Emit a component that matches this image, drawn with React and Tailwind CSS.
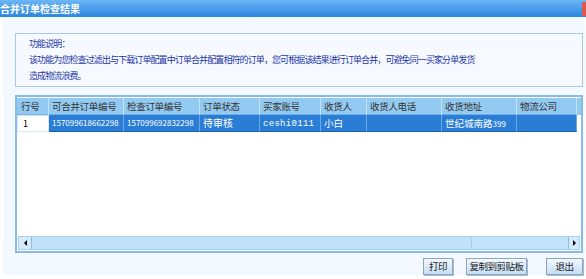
import React from 'react';

const cols = [
  { name: '行号', w: 'w-[32px]' },
  { name: '可合并订单编号', w: 'w-[75px]' },
  { name: '检查订单编号', w: 'w-[76px]' },
  { name: '订单状态', w: 'w-[60px]' },
  { name: '买家账号', w: 'w-[61px]' },
  { name: '收货人', w: 'w-[46px]' },
  { name: '收货人电话', w: 'w-[75px]' },
  { name: '收货地址', w: 'w-[75px]' },
  { name: '物流公司', w: 'w-[60px]' },
];

const Btn = ({ children, className }) => (
  <button className={`${className} h-[17px] border border-[#8aa6c4] bg-gradient-to-b from-[#f2f8fe] to-[#c4def5] text-[9.5px] tracking-[-0.5px] leading-[15px] text-[#222] shadow-[1px_1px_0_#a9bccc]`}>
    {children}
  </button>
);

const Cell = ({ w, children, className = '' }) => (
  <div className={`${w} h-full whitespace-nowrap overflow-hidden bg-[#2a7dd5] text-white border-r border-[#6aa8e6] border-b border-b-[#1e5fb0] pl-[3px] ${className}`}>
    {children}
  </div>
);

export default function App() {
  return (
    <div className="w-[586px] h-[279px] bg-white overflow-hidden" style={{ fontFamily: '"Noto Sans CJK SC", "Noto Sans", sans-serif' }}>
      {/* Title bar */}
      <div className="h-[17px] bg-gradient-to-b from-[#6ab6f6] to-[#2a86de] flex items-center justify-between">
        <span className="text-white font-bold text-[10px] leading-[17px]">合并订单检查结果</span>
        <span className="w-[4px] h-[14px] bg-[#e0584a]"></span>
      </div>

      {/* Body */}
      <div className="ml-[3px] w-[582px] h-[258px] bg-[#f4f9ff] pt-[16px] pl-[12px]">
        {/* Description */}
        <div className="w-[568px] h-[54px] border border-[#a9cbe8] bg-[#f6faff] pl-[13px] pt-[2px] text-[9px] tracking-[-0.9px] leading-[16px] text-[#1c35a8] whitespace-nowrap">
          <div>功能说明：</div>
          <div>该功能为您检查过滤出与下载订单配置中订单合并配置相符的订单，您可根据该结果进行订单合并，可避免同一买家分单发货</div>
          <div>造成物流浪费。</div>
        </div>

        {/* Table */}
        <div className="mt-[8px] w-[568px] h-[158px] border-2 border-[#86bbea] bg-white flex flex-col">
          <div className="flex-1 pt-[1px]">
            <div className="flex h-[17px] bg-[#93caf1] text-[9.5px] tracking-[-0.3px] leading-[16px] text-[#333]">
              {cols.map((c, i) => (
                <div key={c.name} className={`${c.w} border-r border-[#c6e2f8] border-b border-b-[#6fb0e6] ${i === 0 ? 'pl-[4px]' : 'pl-[3px]'} whitespace-nowrap overflow-hidden`}>
                  {c.name}
                </div>
              ))}
            </div>
            <div className="flex h-[17px] text-[9.5px] leading-[16px]">
              <div className="w-[32px] h-full bg-white text-black border border-[#d8e8f6] pl-[5px] text-[9px]">1</div>
              <Cell w="w-[75px]" className="text-[8px] leading-[16px]">157099618662298</Cell>
              <Cell w="w-[76px]" className="text-[8px] leading-[16px]">157099692832298</Cell>
              <Cell w="w-[60px]" className="text-[10px]">待审核</Cell>
              <Cell w="w-[61px]" className="text-[9px] tracking-[0.3px]"><span style={{ fontFamily: '"Liberation Mono", monospace' }}>ceshi0111</span></Cell>
              <Cell w="w-[46px]">小白</Cell>
              <Cell w="w-[75px]"></Cell>
              <Cell w="w-[75px]">世纪城南路<span className="text-[8px]">399</span></Cell>
              <Cell w="w-[60px]"></Cell>
            </div>
          </div>
          {/* Scrollbar */}
          <div className="h-[14px] mx-[1px] mb-[1px] flex border border-[#a6d0f0] bg-[#c2e2f9]">
            <div className="w-[13px] h-full border-r border-[#8fbde6] bg-[#d4ebfb] flex items-center justify-center">
              <span className="w-0 h-0 border-y-[3px] border-y-transparent border-r-[3px] border-r-black"></span>
            </div>
            <div className="w-[440px] h-full border-r border-[#a6d0f0] bg-[#bfe1f9]"></div>
            <div className="flex-1"></div>
            <div className="w-[11px] h-full border-l border-[#8fbde6] bg-[#d4ebfb] flex items-center justify-center">
              <span className="w-0 h-0 border-y-[3px] border-y-transparent border-l-[3px] border-l-black"></span>
            </div>
          </div>
        </div>

        {/* Buttons */}
        <div className="mt-[5px] w-[568px] flex justify-end items-start">
          <Btn className="w-[30px]">打印</Btn>
          <Btn className="w-[61px] ml-[13px]">复制到剪贴板</Btn>
          <Btn className="w-[37px] ml-[19px]">退出</Btn>
        </div>
      </div>
    </div>
  );
}
